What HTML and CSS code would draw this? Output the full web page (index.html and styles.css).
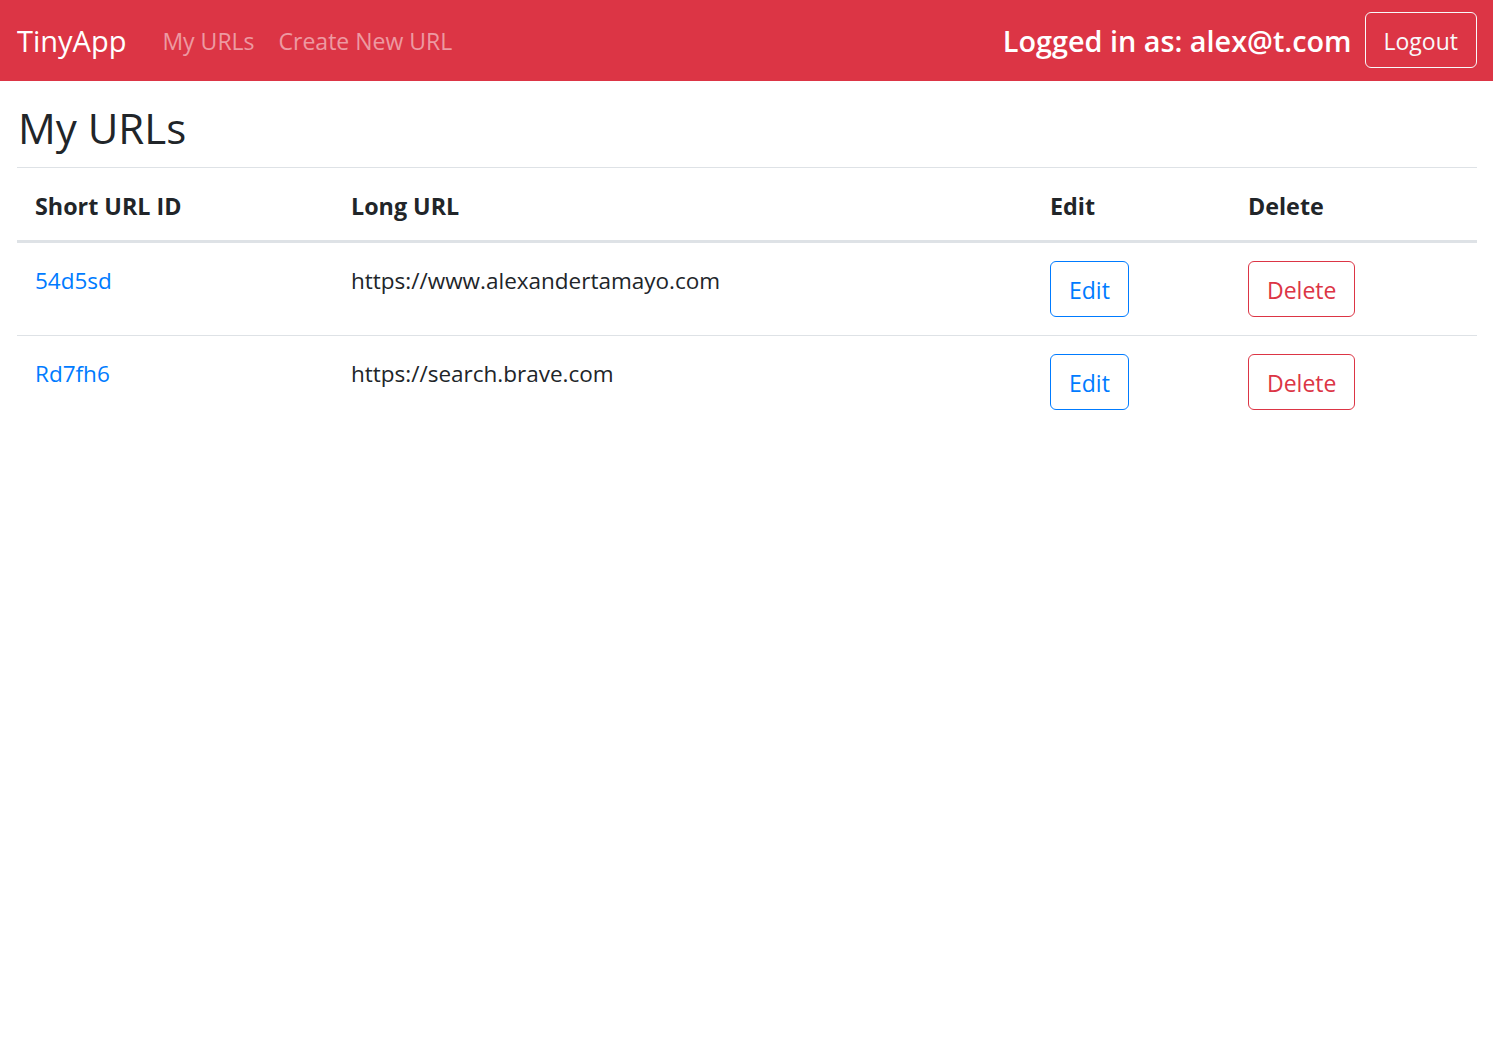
FILE: index.html
```html
<!DOCTYPE html>
<html>
<head>
<meta charset="utf-8">
<link rel="stylesheet" href="styles.css">
</head>
<body>
<nav class="navbar">
  <a class="brand" href="#">TinyApp</a>
  <ul class="nav-links">
    <li><a class="nav-link" href="#">My URLs</a></li>
    <li><a class="nav-link" href="#">Create New URL</a></li>
  </ul>
  <div class="user">
    <span class="user-label">Logged in as: alex@t.com</span>
    <button class="btn btn-light">Logout</button>
  </div>
</nav>
<main class="content">
  <h1 class="title">My URLs</h1>
  <table class="table">
    <thead>
      <tr>
        <th class="col-short">Short URL ID</th>
        <th class="col-long">Long URL</th>
        <th class="col-edit">Edit</th>
        <th class="col-delete">Delete</th>
      </tr>
    </thead>
    <tbody>
      <tr>
        <td class="text-cell"><a class="link" href="#">54d5sd</a></td>
        <td class="text-cell">https://www.alexandertamayo.com</td>
        <td><button class="btn btn-primary">Edit</button></td>
        <td><button class="btn btn-danger">Delete</button></td>
      </tr>
      <tr>
        <td class="text-cell"><a class="link" href="#">Rd7fh6</a></td>
        <td class="text-cell">https://search.brave.com</td>
        <td><button class="btn btn-primary">Edit</button></td>
        <td><button class="btn btn-danger">Delete</button></td>
      </tr>
    </tbody>
  </table>
</main>
</body>
</html>
```
FILE: styles.css
```css
* { box-sizing: border-box; }
html, body { margin: 0; padding: 0; }
body {
  font-family: "Open Sans", "Noto Sans", sans-serif;
  font-size: 22.5px;
  line-height: 36px;
  color: #212529;
  background: #fff;
}
a { text-decoration: none; }

.navbar {
  display: flex;
  align-items: center;
  height: 81px;
  padding: 0 16px 0 17px;
  background: #dc3545;
}
.brand {
  color: #fff;
  font-size: 29px;
  line-height: 45px;
  margin-right: 24px;
}
.nav-links {
  display: flex;
  list-style: none;
  margin: 0;
  padding: 0;
  flex: 1;
}
.nav-link {
  display: block;
  padding: 12px;
  font-size: 23px;
  color: rgba(255, 255, 255, 0.5);
}
.user {
  display: flex;
  align-items: center;
  gap: 13px;
  margin-top: -2px;
}
.user-label {
  color: #fff;
  font-size: 28.8px;
  font-weight: 600;
  padding-top: 2px;
}
.btn {
  font-family: inherit;
  font-size: 23px;
  line-height: 36px;
  padding: 10px 18px 8px;
  border-radius: 6px;
  background: transparent;
  border: 1px solid;
  cursor: pointer;
}
.btn-light { color: #f8f9fa; border-color: #f8f9fa; }
.btn-primary { color: #007bff; border-color: #007bff; }
.btn-danger { color: #dc3545; border-color: #dc3545; }

.content {
  padding: 17px 16px 0 17px;
}
.title {
  margin: 0 0 12px 1px;
  padding-top: 2px;
  font-size: 42px;
  font-weight: 500;
  line-height: 55px;
}
.table {
  width: 100%;
  border-collapse: collapse;
}
.table th, .table td {
  padding: 18px;
  text-align: left;
  vertical-align: top;
  border-top: 1px solid #dee2e6;
}
.table thead th {
  padding: 20px 18px 16px;
  border-bottom: 3px solid #dee2e6;
  font-weight: 700;
  font-size: 23.3px;
}
.table td.text-cell {
  padding: 20px 18px 16px;
}
.col-short { width: 316px; }
.col-long { width: 699px; }
.col-edit { width: 198px; }
.link { color: #007bff; }
```
